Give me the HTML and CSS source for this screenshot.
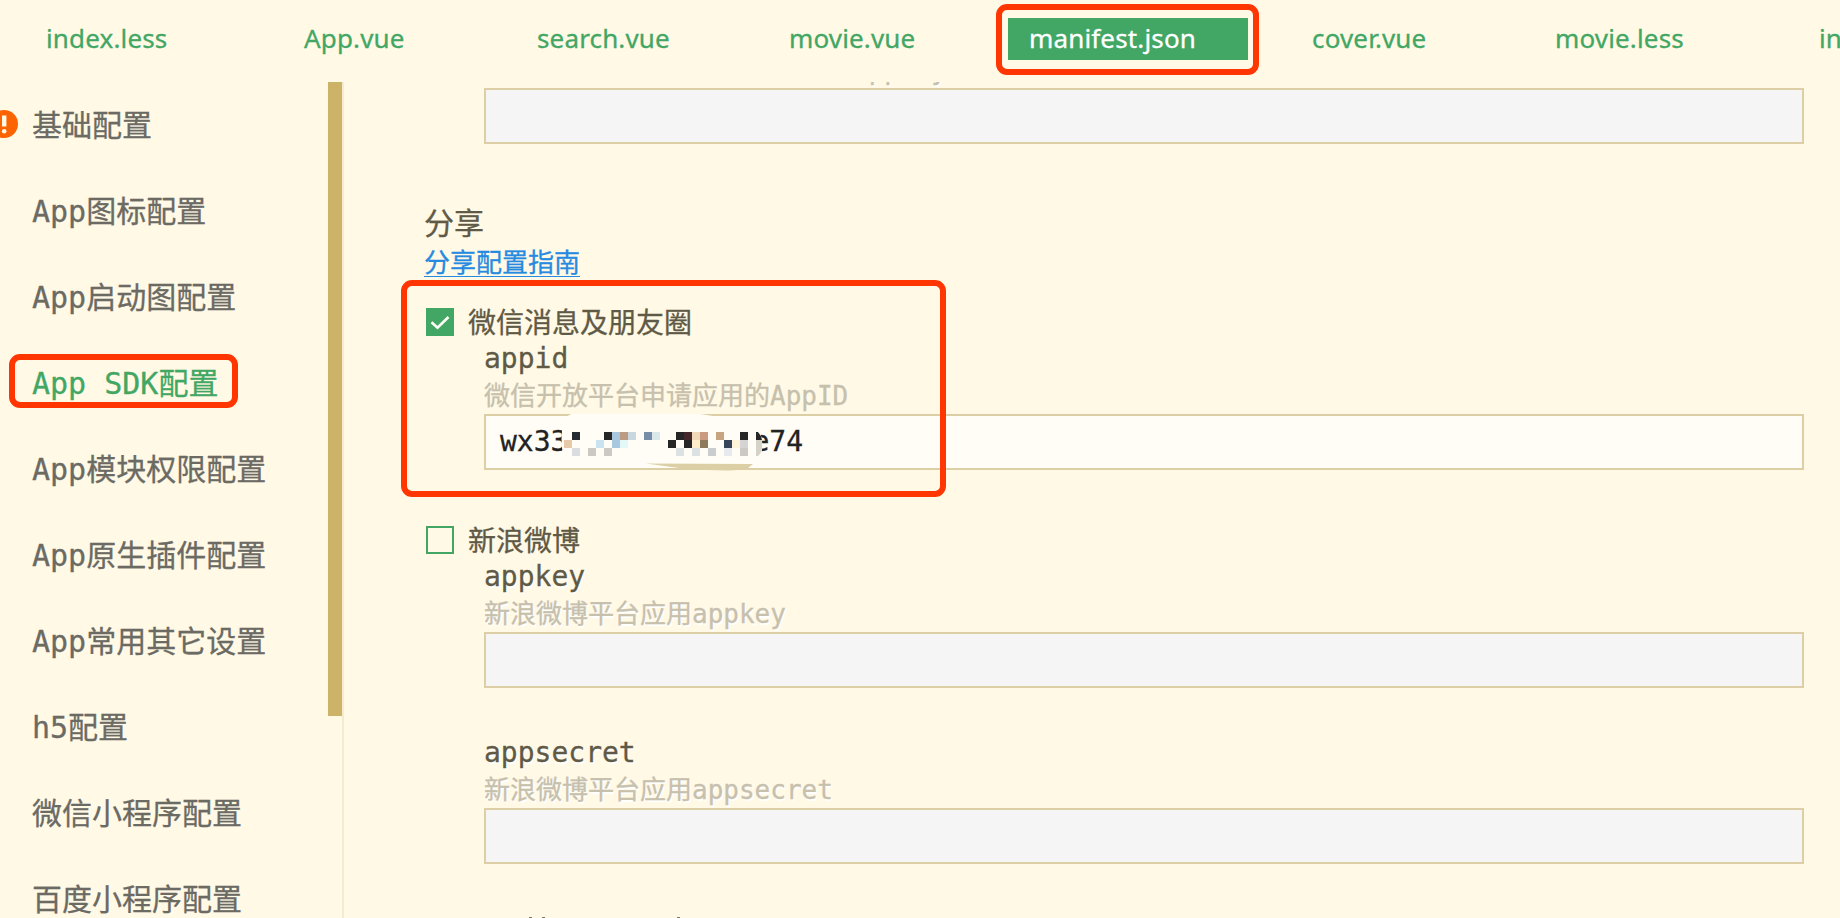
FILE: index.html
```html
<!DOCTYPE html>
<html lang="zh-CN">
<head>
<meta charset="utf-8">
<title>manifest.json</title>
<link rel="stylesheet" href="styles.css">
</head>
<body>
<div class="app">
  <nav class="tabs">
    <div class="tab t1">index.less</div>
    <div class="tab t2">App.vue</div>
    <div class="tab t3">search.vue</div>
    <div class="tab t4">movie.vue</div>
    <div class="tab t5 active">manifest.json</div>
    <div class="tab t6">cover.vue</div>
    <div class="tab t7">movie.less</div>
    <div class="tab t8">in</div>
  </nav>
  <div class="body">
    <aside class="side">
      <ul class="menu">
        <li>基础配置<svg class="warn" viewBox="0 0 28 28"><circle cx="14" cy="14" r="14" fill="#fb6400"/><path d="M12 5.5h4.4v11H12z" fill="#fff9e6"/><circle cx="14.2" cy="21.2" r="2.3" fill="#fff9e6"/></svg></li>
        <li>App图标配置</li>
        <li>App启动图配置</li>
        <li class="current">App SDK配置</li>
        <li>App模块权限配置</li>
        <li>App原生插件配置</li>
        <li>App常用其它设置</li>
        <li>h5配置</li>
        <li>微信小程序配置</li>
        <li>百度小程序配置</li>
      </ul>
      <div class="track"><div class="thumb"></div></div>
    </aside>
    <main class="form">
      <div class="field first raised">
        <div class="hint">appkey</div>
        <div class="input off"></div>
      </div>
      <h2>分享</h2>
      <a class="guide">分享配置指南</a>
      <div class="option opt1">
        <svg class="box" viewBox="0 0 28 28"><path fill="#42a764" d="M0 0h28v28H0z"/><path d="M5.5 14.2l6 5.6L22.5 9" fill="none" stroke="#fffdf5" stroke-width="2.6"/></svg>
        <span>微信消息及朋友圈</span>
      </div>
      <div class="field">
        <div class="label">appid</div>
        <div class="hint">微信开放平台申请应用的AppID</div>
        <div class="input value"><span>wx33</span><span class="tail">e74</span>
          <svg class="mosaic" viewBox="540 410 240 62" shape-rendering="auto">
            <path fill="#fffdf5" d="M571 414Q562 418 562 430Q560 448 566 466L700 466L757 462Q764 452 762 440Q760 418 713 416L700 414Z"/>
            <path fill="#dccfa5" d="M646 463.5L753 464L748 468Q738 471 725 470.5L690 469.5Z"/>
            <g shape-rendering="crispEdges">
              <path fill="#262626" d="M604 432h8v8h-8zM676 432h8v8h-8zM740 432h8v8h-8zM668 440h8v8h-8zM684 440h8v8h-8z"/>
              <path fill="#262a33" d="M572 432h8v8h-8z"/>
              <path fill="#a9c7de" d="M612 432h8v16h-8z"/>
              <path fill="#bb9c82" d="M620 432h8v8h-8z"/>
              <path fill="#c8d8de" d="M628 432h8v8h-8z"/>
              <path fill="#778da8" d="M644 432h8v8h-8z"/>
              <path fill="#dae8ea" d="M652 432h8v8h-8z"/>
              <path fill="#45282c" d="M684 432h8v8h-8z"/>
              <path fill="#f0d8b8" d="M692 432h8v8h-8z"/>
              <path fill="#c99a80" d="M700 432h8v8h-8z"/>
              <path fill="#c9a480" d="M716 432h8v8h-8z"/>
              <path fill="#e8caaa" d="M564 440h8v8h-8z"/>
              <path fill="#c9e3f0" d="M596 440h8v8h-8z"/>
              <path fill="#e3f9f7" d="M620 440h8v8h-8z"/>
              <path fill="#ffecca" d="M692 440h8v8h-8z"/>
              <path fill="#8e7b5c" d="M700 440h8v8h-8z"/>
              <path fill="#384459" d="M724 440h8v8h-8z"/>
              <path fill="#fff6da" d="M732 440h8v8h-8z"/>
              <path fill="#d5d4d4" d="M740 440h8v8h-8z"/>
              <path fill="#dadde0" d="M572 448h8v8h-8z"/>
              <path fill="#ccc8c4" d="M588 448h8v8h-8zM604 448h8v8h-8zM740 448h8v8h-8z"/>
              <path fill="#dce2e2" d="M676 448h8v8h-8zM692 448h8v8h-8z"/>
              <path fill="#cacdd0" d="M708 448h8v8h-8z"/>
              <path fill="#e6e9ee" d="M724 448h8v8h-8z"/>
            </g>
            <path fill="#262626" d="M756 432h2q3 3 4 8h-6z"/>
            <path fill="#d5d2c8" d="M756 440h6v8q-1 6-4 8h-2z"/>
          </svg>
        </div>
      </div>
      <div class="option opt2">
        <svg class="box" viewBox="0 0 28 28"><path fill="none" stroke="#42a764" stroke-width="2" d="M1 1h26v26H1z"/></svg>
        <span>新浪微博</span>
      </div>
      <div class="field raised">
        <div class="label">appkey</div>
        <div class="hint">新浪微博平台应用appkey</div>
        <div class="input off"></div>
      </div>
      <div class="field raised secret">
        <div class="label">appsecret</div>
        <div class="hint">新浪微博平台应用appsecret</div>
        <div class="input off"></div>
      </div>
      <div class="next"><i></i><i></i><i></i></div>
    </main>
  </div>
  <div class="mark mark-tab"></div>
  <div class="mark mark-menu"></div>
  <div class="mark mark-form"></div>
</div>
</body>
</html>
```
FILE: styles.css
```css
* { box-sizing: border-box; }
body { margin: 0; background: #fff9e6; }
.app { position: relative; width: 1840px; height: 918px; overflow: hidden; display: flex; flex-direction: column; font-family: "DejaVu Sans Mono", "Noto Sans CJK SC", monospace; -webkit-text-stroke: 0.3px currentColor; }
.tabs { flex: none; height: 82px; display: flex; align-items: flex-start; padding-top: 18px; font: 26px/40px "Noto Sans", sans-serif; letter-spacing: 0.15px; color: #42a764; overflow: hidden; }
.tab { flex: none; white-space: nowrap; }
.t1 { width: 258px; padding-left: 46px; }
.t2 { width: 232px; padding-left: 46px; }
.t3 { width: 252px; padding-left: 47px; }
.t4 { width: 266px; padding-left: 47px; }
.t5 { width: 240px; padding-left: 21px; }
.t6 { width: 243px; padding-left: 64px; }
.t7 { width: 264px; padding-left: 64px; }
.t8 { width: 85px; padding-left: 64px; overflow: hidden; }
.active { height: 42px; background: #42a764; color: #fff; line-height: 41px; }
.body { flex: 1; display: flex; min-height: 0; }
.side { flex: none; width: 344px; display: flex; justify-content: space-between; border-right: 2px solid #f4ecd2; }
.menu { list-style: none; margin: 0; padding: 1px 0 0 32px; font-size: 30px; line-height: 86px; color: #6b6a63; }
.menu li { position: relative; height: 86px; white-space: pre; }
.menu .current { color: #42a764; }
.warn { position: absolute; left: -42px; top: 27px; width: 28px; height: 28px; }
.track { width: 14px; }
.thumb { height: 634px; background: #cdb367; }
.form { flex: none; width: 1460px; padding-left: 80px; color: #5f5a46; overflow: hidden; }
.field { margin-left: 60px; }
.first { margin-top: -30px; }
.first .hint { padding-left: 369px; }
h2 { margin: 60px 0 0; font-size: 30px; line-height: 40px; font-weight: normal; }
.guide { display: block; width: max-content; font-size: 26px; line-height: 39px; height: 33px; color: #268be0; border-bottom: 1px solid #268be0; }
.option { display: flex; align-items: center; height: 36px; font-size: 28px; }
.option span { padding-bottom: 2px; }
.opt1 { margin-top: 27px; }
.opt2 { margin-top: 52px; }
.box { width: 28px; height: 28px; margin: 0 14px 0 2px; }
.label { font-size: 28px; line-height: 38px; }
.hint { height: 36px; font-size: 26px; line-height: 36px; color: #c6c0ad; }
.input { height: 56px; border: 2px solid #dccfa5; background: #fffdf5; font-size: 28px; line-height: 52px; padding-left: 14px; color: #222; }
.input.off { background: #f5f5f5; }
.value { position: relative; }
.tail { margin-left: 185px; }
.mosaic { position: absolute; left: 54px; top: -6px; width: 240px; height: 62px; }
.raised { text-shadow: 1px 2px 1px #fff; }
.secret { margin-top: 46px; }
.next { display: flex; margin: 53px 0 0 105px; }
.next i { width: 3px; height: 1px; background: #7d7866; }
.next i + i { margin-left: 10px; }
.next i + i + i { margin-left: 132px; }
.mark { position: absolute; border: 6px solid #ff3502; border-radius: 11px; }
.mark-tab { left: 996px; top: 4px; width: 263px; height: 71px; }
.mark-menu { left: 9px; top: 354px; width: 229px; height: 54px; }
.mark-form { left: 401px; top: 280px; width: 545px; height: 217px; }
```
